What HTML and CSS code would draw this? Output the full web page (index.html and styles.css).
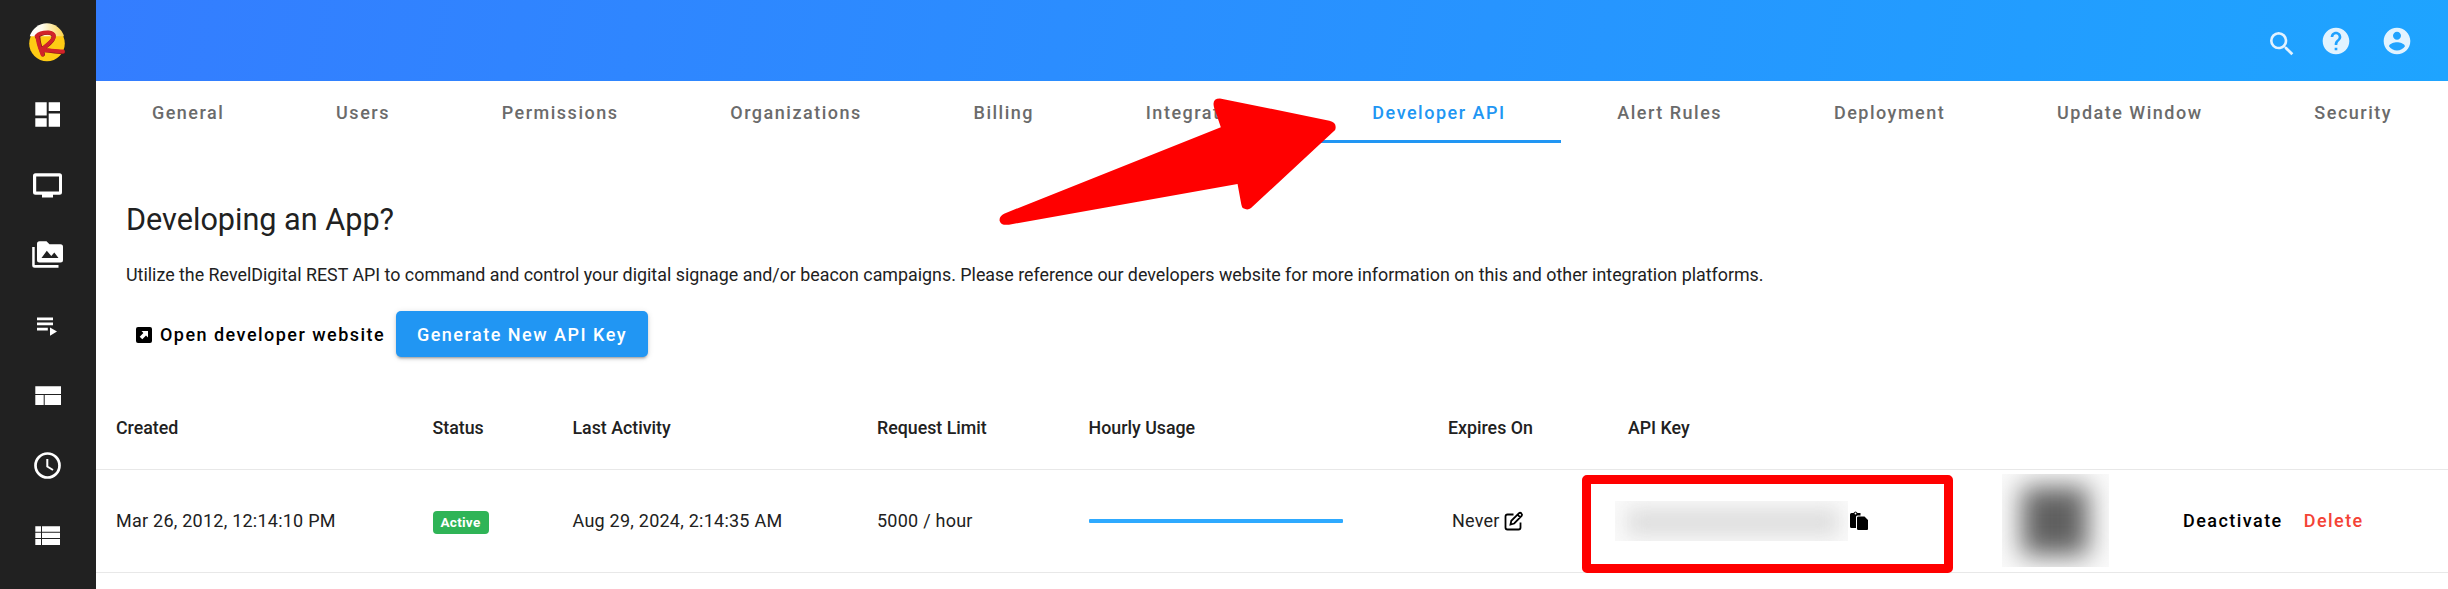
FILE: index.html
```html
<!DOCTYPE html>
<html lang="en">
<head>
<meta charset="utf-8">
<title>Developer API</title>
<link rel="stylesheet" href="styles.css">
</head>
<body>
<div class="app">
  <nav class="sidebar">
    <svg class="brand" viewBox="0 0 96 79">
      <defs><linearGradient id="gloss" x1="0" x2="1" y1="0" y2="0"><stop offset="0" stop-color="#fff"/><stop offset=".35" stop-color="#fffdf0"/><stop offset="1" stop-color="#fbd24a"/></linearGradient></defs>
      <circle cx="47" cy="43.5" r="17.8" fill="#ffcb14"/>
      <path d="M29.8 36.2A17.8 17.8 0 0 1 64 36.2Z" fill="url(#gloss)"/>
      <path d="M37 37C42 32 54 31 53.500 37C53 43 45 46 41.500 50C48 50 55 52 63 52M38.500 38C38.500 44 41 49 43 54.500" fill="none" stroke="#7a1a10" stroke-width="4" stroke-linecap="round" stroke-linejoin="round"/>
      <path d="M36.500 36C41 31.500 54.500 31 54 36.500C53.500 41.500 46 44.500 42 50C48 50 55 51.500 63 51.500M37.500 37C38 44 40.500 49 42.500 54.500" fill="none" stroke="#d2232a" stroke-width="3.800" stroke-linecap="round" stroke-linejoin="round"/>
    </svg>
    <svg class="item" viewBox="0 0 96 70"><path d="M35.300 23.300H46.700V36.500H35.300ZM35.300 39.300H46.700V47.700H35.300ZM48.700 23.300H60V32H48.700ZM48.700 34.500H60V47.700H48.700Z"/></svg>
    <svg class="item" viewBox="0 0 96 70"><path fill-rule="evenodd" d="M35.500 24.300H59.500Q62 24.300 62 26.800V43.200Q62 45.700 59.500 45.700H53V48.500H42V45.700H35.500Q33 45.700 33 43.200V26.800Q33 24.300 35.500 24.300ZM36.200 27.500V42.500H59V27.500Z"/></svg>
    <svg class="item" viewBox="0 0 96 70"><path fill-rule="evenodd" d="M39.500 22.300H46.500L49.500 25.200H60.500Q63 25.200 63 27.700V41Q63 43.500 60.500 43.500H39.500Q37 43.500 37 41V24.800Q37 22.300 39.500 22.300ZM41.500 39H58.500L54.300 33.500L51.300 37L46.800 31.800ZM32.200 28H34.700V46H58.500V48.700H34.700Q32.200 48.700 32.200 46.200Z"/></svg>
    <svg class="item" viewBox="0 0 96 70"><path d="M37 28.500H53V31.300H37ZM37 33.500H53V36.300H37ZM37 38.800H47.800V41.600H37ZM50 38.500L57 42.500L50 46.700Z"/></svg>
    <svg class="item" viewBox="0 0 96 70"><path d="M35.300 27.300H61V35H35.300ZM35.300 36H43.700V46H35.300ZM44.700 36H61V46H44.700Z"/></svg>
    <svg class="item" viewBox="0 0 96 70"><circle class="line" cx="47.500" cy="36.500" r="12"/><path class="line hands" d="M47.300 30V37.500L53 41"/></svg>
    <svg class="item" viewBox="0 0 96 70"><path d="M35.300 27.300H41V32.700H35.300ZM42 27.300H60V32.700H42ZM35.300 33.700H41V39H35.300ZM42 33.700H60V39H42ZM35.300 40H41V46H35.300ZM42 40H60V46H42Z"/></svg>
  </nav>
  <div class="main">
    <header class="topbar">
      <svg class="search" viewBox="0 0 24 24"><path d="M15.500 14h-.79l-.28-.27A6.471 6.471 0 0 0 16 9.500 6.500 6.500 0 1 0 9.500 16c1.610 0 3.090-.59 4.230-1.570l.27.28v.79l5 4.990L20.490 19l-4.990-5zm-6 0C7.010 14 5 11.990 5 9.500S7.010 5 9.500 5 14 7.010 14 9.500 11.990 14 9.500 14z"/></svg>
      <svg class="help" viewBox="0 0 24 24"><path d="M12 2C6.480 2 2 6.480 2 12s4.480 10 10 10 10-4.480 10-10S17.520 2 12 2zm1 17h-2v-2h2v2zm2.070-7.750l-.9.920C13.450 12.900 13 13.500 13 15h-2v-.5c0-1.100.45-2.100 1.170-2.830l1.240-1.260c.37-.36.59-.86.59-1.410 0-1.100-.9-2-2-2s-2 .9-2 2H8c0-2.210 1.790-4 4-4s4 1.790 4 4c0 .88-.36 1.680-.93 2.250z"/></svg>
      <svg class="account" viewBox="0 0 24 24"><path d="M12 2C6.480 2 2 6.480 2 12s4.480 10 10 10 10-4.480 10-10S17.520 2 12 2zm0 3c1.660 0 3 1.340 3 3s-1.340 3-3 3-3-1.340-3-3 1.340-3 3-3zm0 14.200c-2.500 0-4.710-1.280-6-3.220.03-1.990 4-3.080 6-3.080 1.990 0 5.970 1.090 6 3.080-1.290 1.940-3.500 3.220-6 3.220z"/></svg>
    </header>
    <div class="tabs">
      <a class="tab">General</a><a class="tab">Users</a><a class="tab">Permissions</a><a class="tab">Organizations</a><a class="tab">Billing</a><a class="tab">Integrations</a><a class="tab active">Developer API</a><a class="tab">Alert Rules</a><a class="tab">Deployment</a><a class="tab">Update Window</a><a class="tab">Security</a>
    </div>
    <section class="intro">
      <h1 class="title">Developing an App?</h1>
      <p class="lead">Utilize the RevelDigital REST API to command and control your digital signage and/or beacon campaigns. Please reference our developers website for more information on this and other integration platforms.</p>
      <div class="actions">
        <a class="open"><svg class="ext" viewBox="0 0 16 16"><rect width="16" height="16" rx="2" fill="#000"/><path d="M5.500 4H12V10.500L10 8.600L6.300 12.300L3.700 9.700L7.400 6Z" fill="#fff"/></svg>Open developer website</a>
        <button class="generate">Generate New API Key</button>
      </div>
    </section>
    <div class="table">
      <div class="row head">
        <span>Created</span><span>Status</span><span>Last Activity</span><span>Request Limit</span><span>Hourly Usage</span><span>Expires On</span><span>API Key</span><span></span><span></span>
      </div>
      <div class="row">
        <span>Mar 26, 2012, 12:14:10 PM</span>
        <span><b class="badge">Active</b></span>
        <span>Aug 29, 2024, 2:14:35 AM</span>
        <span>5000 / hour</span>
        <span><i class="usage"></i></span>
        <span class="expires">Never<svg class="edit" viewBox="0 0 20 20"><path d="M9.500 3.500H3.500Q1.500 3.500 1.500 5.500V16.500Q1.500 18.500 3.500 18.500H14.500Q16.500 18.500 16.500 16.500V11.500M6.500 13.500L7.300 9.800L14.800 2.300Q16 1.200 17.300 2.300Q18.700 3.600 17.600 5L10.200 12.500ZM13.500 3.600L16.300 6.400"/></svg></span>
        <span class="key"><i class="masked"><i class="maskcore"></i></i><svg class="copy" viewBox="0 0 20 20"><path d="M2.500 2H4.500Q6.500 -1 8.500 2H11.500V4.500H8.500Q7 4.500 7 6V17H2.500Q1 17 1 15.500V3.500Q1 2 2.500 2ZM9.500 5.500H15.500L19 9V18Q19 19 18 19H9.500Q8 19 8 18V6.500Q8 5.500 9.500 5.500Z"/><circle cx="6.500" cy="2.500" r=".9" fill="#fff"/></svg></span>
        <span class="qrcell"><i class="qr"><i class="qrcore"></i></i></span>
        <span class="ops"><a>Deactivate</a><a class="delete">Delete</a></span>
      </div>
    </div>
  </div>
</div>
<svg class="arrow" viewBox="0 0 1568 510" preserveAspectRatio="none"><path d="M108 431L639 172L622 110Q617 84 640 86L905 152Q925 158 919 180L713 414Q705 422 694 415Q690 412 688 395L680 342L120 464Q100 467 97 452Q96 438 108 431Z"/></svg>
<div class="highlight"></div>
</body>
</html>
```
FILE: styles.css
```css
* { box-sizing: border-box; }
body { margin: 0; background: #fff; color: #212121; font: 400 18px/24px Roboto, sans-serif; overflow: hidden; }
.app { display: flex; width: 2448px; height: 589px; }
.sidebar { width: 96px; flex: none; background: #212121; display: flex; flex-direction: column; }
.brand { width: 96px; height: 79px; flex: none; }
.item { width: 96px; height: 70px; flex: none; fill: #fff; }
.line { fill: none; stroke: #fff; stroke-width: 2.7px; }
.hands { stroke-width: 2px; }
.main { flex: 1; min-width: 0; }
.topbar { height: 81.25px; display: flex; align-items: flex-start; justify-content: flex-end; padding: 24.5px 34.7px 0 0; background: linear-gradient(100deg, #347dff, #1ea4ff); }
.topbar svg { width: 32px; height: 32px; fill: #fff; opacity: .87; }
.search { margin: 3.2px 21.7px 0 0; }
.help { margin-right: 29.3px; }
.tabs { display: flex; height: 61.5px; }
.tab { flex: 1 1 auto; display: flex; align-items: center; justify-content: center; padding: 4px 0 0; border-bottom: 3px solid transparent; color: #6b6b6b; font-size: 18px; font-weight: 500; letter-spacing: 1.5px; }
.active { color: #2196f3; border-color: #2196f3; }
.intro { padding: 57px 30px 0; height: 242px; }
.title { margin: 0; font-size: 30.6px; font-weight: 400; line-height: 40px; }
.lead { margin: 23px 0 0; font-size: 17.85px; line-height: 24px; white-space: nowrap; }
.actions { display: flex; align-items: center; margin-top: 24px; }
.open { display: flex; align-items: center; gap: 8px; margin-left: 10px; width: 260px; padding-top: 2px; color: #000; font-size: 18px; font-weight: 500; letter-spacing: 1.47px; white-space: nowrap; }
.ext { width: 16px; height: 16px; }
.generate { width: 252px; height: 46px; padding: 2px 0 0; border: 0; border-radius: 5px; background: #2196f3; color: #fff; font: 500 18px Roboto, sans-serif; letter-spacing: 1.5px; box-shadow: 0 3px 2px -2px rgba(0,0,0,.2), 0 2px 3px rgba(0,0,0,.14), 0 1px 6px rgba(0,0,0,.12); }
.row { display: grid; grid-template-columns: 316.5px 140px 304.5px 211.6px 359.4px 180px 374px 181px 1fr; padding-left: 20px; height: 103px; align-items: center; border-bottom: 1px solid #e8e8e8; white-space: nowrap; letter-spacing: .24px; }
.head { height: 85px; padding-top: 3px; font-size: 17.8px; font-weight: 500; letter-spacing: 0; }
.badge { display: block; width: 56px; height: 22.5px; margin-top: 3px; border-radius: 4px; background: #2fb457; color: #fff; font-size: 13.6px; line-height: 23px; text-align: center; }
.usage { display: block; width: 254px; height: 4px; border-radius: 1px; background: #2eaaff; }
.expires { display: flex; align-items: center; padding-left: 4px; }
.edit { width: 20px; height: 20px; margin-left: 4px; fill: none; stroke: #000; stroke-width: 1.8px; }
.key { display: flex; align-items: center; }
.masked { width: 233px; height: 40px; flex: none; margin: 0 1px 0 -13px; overflow: hidden; background: #fafafa; }
.maskcore { display: block; width: 212px; height: 28px; margin: 7px 0 0 12px; background: #dedede; filter: blur(10px); }
.copy { width: 20px; height: 20px; flex: none; }
.qr { display: block; width: 107px; height: 93px; overflow: hidden; background: #fafafa; }
.qrcore { display: block; width: 66px; height: 68px; margin: 13px 0 0 20px; background: #606060; filter: blur(13px); }
.ops { display: flex; gap: 21px; color: #000; font-size: 18px; font-weight: 500; letter-spacing: 1.45px; }
.delete { color: #f44336; }
.arrow { position: absolute; left: 960px; top: 70px; width: 640px; height: 170px; fill: #f00; }
.highlight { position: absolute; left: 1582px; top: 475px; width: 371px; height: 98px; border: 9px solid #f00; border-radius: 5px; }
```
